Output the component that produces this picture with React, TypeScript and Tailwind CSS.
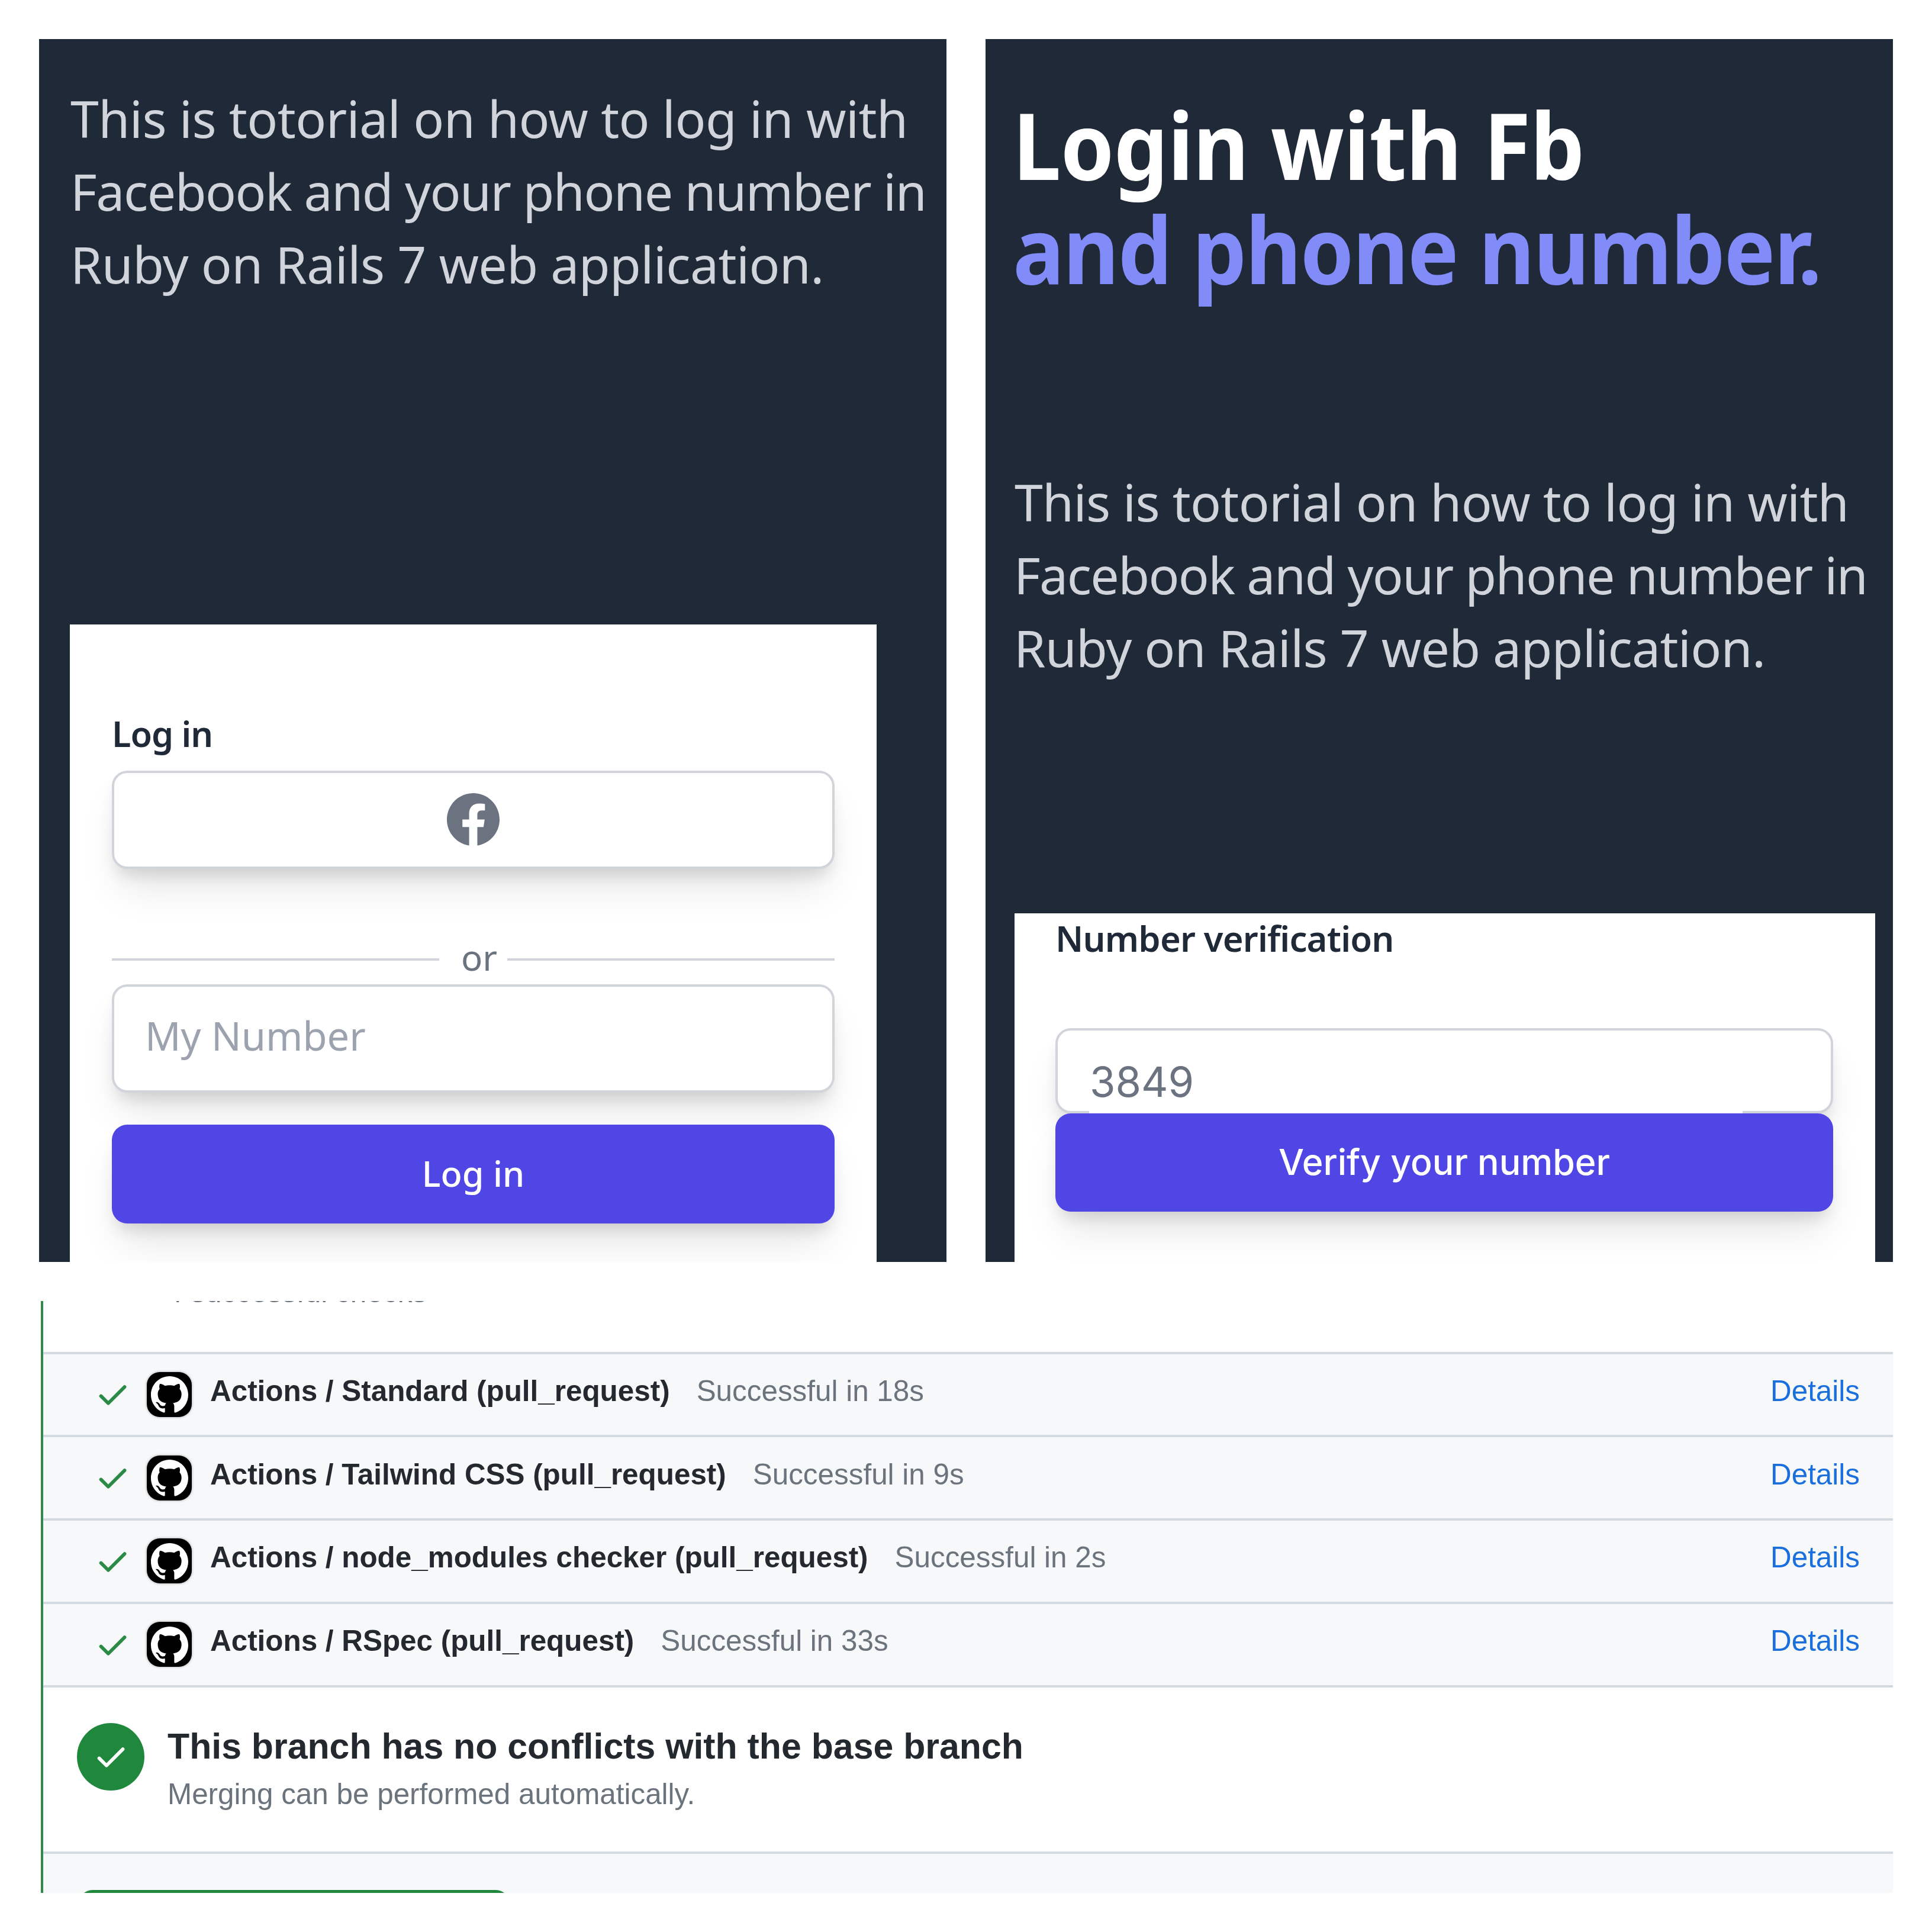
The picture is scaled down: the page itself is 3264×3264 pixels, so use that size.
import React from "react";

const cardShadow =
  "shadow-[0_44px_66px_-13px_rgba(0,0,0,0.1),0_18px_26px_-8px_rgba(0,0,0,0.12)]";

function FacebookIcon() {
  return (
    <svg viewBox="0 0 20 20" className="size-[89px] fill-[#6b7280]">
      <path
        fillRule="evenodd"
        d="M20 10c0-5.523-4.477-10-10-10S0 4.477 0 10c0 4.991 3.657 9.128 8.438 9.878v-6.987h-2.54V10h2.54V7.797c0-2.506 1.492-3.89 3.777-3.89 1.094 0 2.238.195 2.238.195v2.46h-1.26c-1.243 0-1.63.771-1.63 1.562V10h2.773l-.443 2.89h-2.33v6.988C16.343 19.128 20 14.991 20 10z"
      />
    </svg>
  );
}

function CheckIcon({ className }: { className: string }) {
  return (
    <svg viewBox="0 0 16 16" className={"size-[61px] shrink-0 " + className}>
      <path d="M13.78 4.22a.75.75 0 0 1 0 1.06l-7.25 7.25a.75.75 0 0 1-1.06 0L2.22 9.28a.751.751 0 0 1 .018-1.042.751.751 0 0 1 1.042-.018L6 10.94l6.72-6.72a.75.75 0 0 1 1.06 0Z" />
    </svg>
  );
}

function GithubAvatar() {
  return (
    <span className="flex size-[76px] shrink-0 items-center justify-center rounded-[22px] bg-black shadow-[0_0_4px_rgba(0,0,0,0.35)]">
      <svg viewBox="0 0 16 16" className="mt-[2px] size-[63px] fill-white">
        <path d="M8 0C3.58 0 0 3.58 0 8c0 3.54 2.29 6.53 5.47 7.59.4.07.55-.17.55-.38 0-.19-.01-.82-.01-1.49-2.01.37-2.53-.49-2.69-.94-.09-.23-.48-.94-.82-1.13-.28-.15-.68-.52-.01-.53.63-.01 1.08.58 1.23.82.72 1.21 1.87.87 2.33.66.07-.52.28-.87.51-1.07-1.78-.2-3.64-.89-3.64-3.95 0-.87.31-1.59.82-2.15-.08-.2-.36-1.02.08-2.12 0 0 .67-.21 2.2.82.64-.18 1.32-.27 2-.27s1.36.09 2 .27c1.53-1.04 2.2-.82 2.2-.82.44 1.1.16 1.92.08 2.12.51.56.82 1.27.82 2.15 0 3.07-1.87 3.75-3.65 3.95.29.25.54.73.54 1.48 0 1.07-.01 1.93-.01 2.2 0 .21.15.46.55.38A8.01 8.01 0 0 0 16 8c0-4.42-3.58-8-8-8Z" />
      </svg>
    </span>
  );
}

function LoginPanel() {
  return (
    <section className="h-[2066px] w-[1533px] overflow-hidden bg-[#1f2937] pl-[52px] pt-[72px]">
      <p className="ml-px whitespace-nowrap text-[86px] leading-[123.2px] text-[#d1d5db]">
        <span className="block tracking-[-0.58px]">This is totorial on how to log in with</span>
        <span className="block tracking-[-1.5px]">Facebook and your phone number in</span>
        <span className="block tracking-[-0.65px]">Ruby on Rails 7 web application.</span>
      </p>
      <div className="mt-[547px] h-[1100px] w-[1363px] bg-white pl-[71px] pr-[71px] pt-[140px]">
        <h2 className="text-[59.3px] font-semibold leading-[88px] tracking-[-1px] text-[#1f2937]">Log in</h2>
        <button className={"mt-[19px] flex h-[166px] w-full items-center justify-center rounded-[26px] border-4 border-[#d1d5db] bg-white " + cardShadow}>
          <FacebookIcon />
        </button>
        <div className="mt-[105px] flex items-center text-[60px] leading-[88px] text-[#6b7280]">
          <span className="mt-2 h-1 w-[553px] bg-[#d1d5db]" />
          <span className="w-[115px] pl-[37px]">or</span>
          <span className="mt-2 h-1 w-[553px] bg-[#d1d5db]" />
        </div>
        <div className={"mt-[2px] flex h-[183px] items-center rounded-[26px] border-4 border-[#d1d5db] bg-white pb-2 pl-[52px] text-[66.8px] text-[#9ca3af] " + cardShadow}>
          My Number
        </div>
        <button className={"relative mt-[54px] flex h-[167px] w-full items-center justify-center rounded-[26px] bg-[#4f46e5] pb-0.5 text-[59.3px] font-medium text-white " + cardShadow}>
          Log in
        </button>
      </div>
    </section>
  );
}

function VerifyPanel() {
  return (
    <section className="h-[2066px] w-[1533px] overflow-hidden bg-[#1f2937] pl-[49px] pt-[90px]">
      <h1 className="w-max origin-left scale-x-93 whitespace-nowrap text-[156px] font-bold leading-[176px] text-white">
        <span className="-ml-[3px] block tracking-[-0.6px]">Login with Fb</span>
        <span className="-ml-[3px] block tracking-[-2px] text-[#818cf8]">and phone number.</span>
      </h1>
      <p className="mt-[278px] whitespace-nowrap text-[86px] leading-[123px] text-[#d1d5db]">
        <span className="block tracking-[-0.72px]">This is totorial on how to log in with</span>
        <span className="-ml-px block tracking-[-1.62px]">Facebook and your phone number in</span>
        <span className="-ml-px block tracking-[-0.76px]">Ruby on Rails 7 web application.</span>
      </p>
      <div className="mt-[388px] h-[600px] w-[1454px] bg-white pl-[69px] pr-[71px]">
        <h2 className="text-[59.7px] font-semibold leading-[84px] tracking-[-0.8px] text-[#1f2937]">Number verification</h2>
        <div className={"relative mt-[110px] h-[144px] rounded-[26px] border-4 border-[#d1d5db] bg-white pl-[54px] pt-[39px] font-[Inter,sans-serif] text-[70.4px] leading-[96px] text-[#6b7280] " + cardShadow}>
          3849
          <span className="absolute -bottom-1 left-[53px] h-[6px] w-[1104px] bg-white" />
        </div>
        <button className={"relative flex h-[166px] w-full items-center justify-center rounded-[26px] bg-[#4f46e5] font-[Inter,sans-serif] text-[60.8px] font-medium text-white " + cardShadow}>
          Verify your number
        </button>
      </div>
    </section>
  );
}

const checks = [
  { name: "Actions / Standard (pull_request)", status: "Successful in 18s" },
  { name: "Actions / Tailwind CSS (pull_request)", status: "Successful in 9s" },
  { name: "Actions / node_modules checker (pull_request)", status: "Successful in 2s" },
  { name: "Actions / RSpec (pull_request)", status: "Successful in 33s" },
];

function ChecksPanel() {
  return (
    <section className="h-[1000px] w-[3132px] overflow-hidden bg-white pl-[3px] font-['Liberation_Sans',Arial,sans-serif]">
      <div className="h-full border-l-4 border-[#2f8c4b]">
        <div className="flow-root h-[85.5px]">
          <div className="-mt-[52px] pl-[208px] text-[49.5px] leading-[74px] text-[#656d76]">4 successful checks</div>
        </div>
        {checks.map((c) => (
          <div
            key={c.name}
            className="flex h-[140.75px] items-center border-t-4 border-[#d3dae1] bg-[#f6f8fa] pl-[87px] pr-[56px] text-[49.4px] leading-[74px]"
          >
            <CheckIcon className="fill-[#2a8a46]" />
            <span className="ml-[27px] flex">
              <GithubAvatar />
            </span>
            <span className="ml-[31px] pb-3 font-bold text-[#24292f]">{c.name}</span>
            <span className="ml-[45px] pb-3 text-[#6b737c]">{c.status}</span>
            <a className="ml-auto pb-3 text-[#1a6fdc]">Details</a>
          </div>
        ))}
        <div className="flex h-[281.5px] border-t-4 border-[#d3dae1] pl-[57px]">
          <span className="mt-[60px] flex size-[114px] shrink-0 items-center justify-center rounded-full bg-[#1f883d]">
            <CheckIcon className="fill-white" />
          </span>
          <div className="ml-[39px] mt-[57px]">
            <h3 className="text-[60.8px] font-bold leading-[84px] text-[#24292f]">
              This branch has no conflicts with the base branch
            </h3>
            <p className="mt-[2px] text-[49.4px] leading-[74px] text-[#6b737c]">Merging can be performed automatically.</p>
          </div>
        </div>
        <div className="h-[90px] border-t-4 border-[#d3dae1] bg-[#f6f8fa] pl-[61px] pt-[61px]">
          <div className="h-[120px] w-[726px] rounded-[22px] bg-[#1f883d]" />
        </div>
      </div>
    </section>
  );
}

export default function App() {
  return (
    <main className="flex h-[3264px] w-[3264px] flex-col gap-[66px] overflow-hidden bg-white p-[66px] font-['Noto_Sans',sans-serif]">
      <div className="flex gap-[66px]">
        <LoginPanel />
        <VerifyPanel />
      </div>
      <ChecksPanel />
    </main>
  );
}
